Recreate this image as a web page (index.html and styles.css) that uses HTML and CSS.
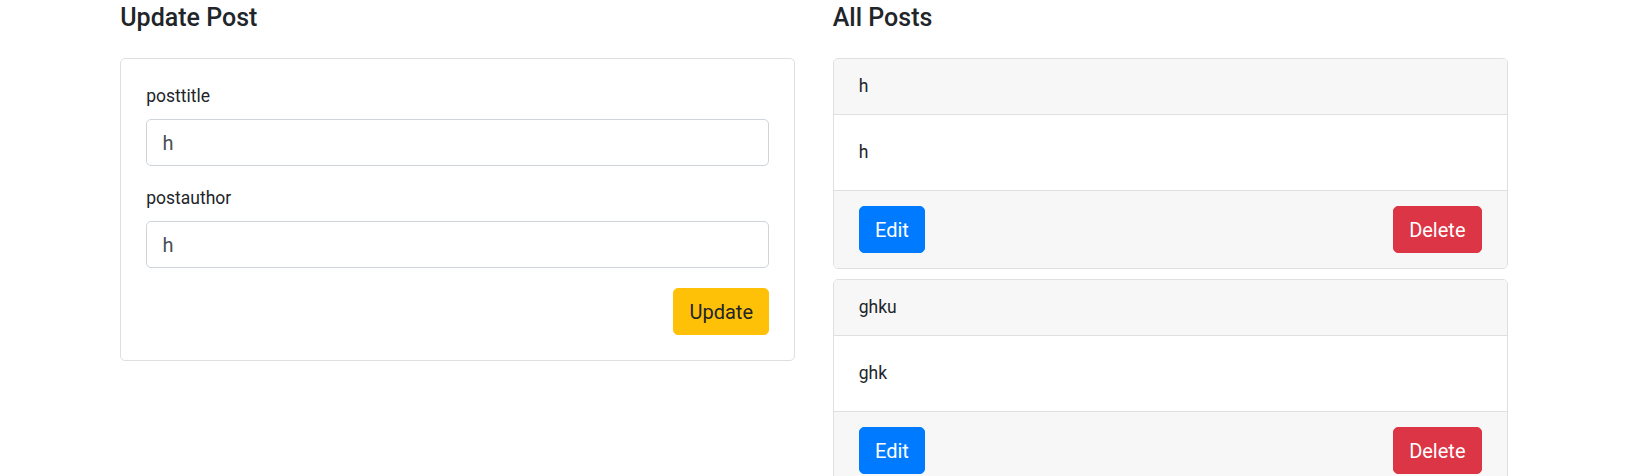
FILE: index.html
```html
<!DOCTYPE html>
<html lang="en">
<head>
<meta charset="utf-8">
<title>Posts</title>
<link rel="stylesheet" href="styles.css">
</head>
<body>
<div class="container">
  <div class="row">
    <section class="col">
      <h5 class="title">Update Post</h5>
      <form class="card">
        <div class="card-body">
          <div class="form-group">
            <label class="label" for="posttitle">posttitle</label>
            <input class="input" id="posttitle" type="text" value="h">
          </div>
          <div class="form-group">
            <label class="label" for="postauthor">postauthor</label>
            <input class="input" id="postauthor" type="text" value="h">
          </div>
          <div class="actions">
            <button type="button" class="btn btn-warning">Update</button>
          </div>
        </div>
      </form>
    </section>
    <section class="col">
      <h5 class="title">All Posts</h5>
      <div class="card post">
        <div class="card-header">h</div>
        <div class="card-body post-body">h</div>
        <div class="card-footer">
          <button type="button" class="btn btn-primary">Edit</button>
          <button type="button" class="btn btn-danger">Delete</button>
        </div>
      </div>
      <div class="card post">
        <div class="card-header">ghku</div>
        <div class="card-body post-body">ghk</div>
        <div class="card-footer">
          <button type="button" class="btn btn-primary">Edit</button>
          <button type="button" class="btn btn-danger">Delete</button>
        </div>
      </div>
    </section>
  </div>
</div>
</body>
</html>
```
FILE: styles.css
```css
* { box-sizing: border-box; }

html, body {
  margin: 0;
  padding: 0;
  background: #fff;
}

body {
  font-family: Roboto, "Liberation Sans", Arial, sans-serif;
  color: #212529;
  font-size: 17.5px;
  line-height: 25px;
}

.container {
  width: 1425px;
  margin: 0 auto;
  padding: 3px 18.75px 0;
}

.row {
  display: grid;
  grid-template-columns: 1fr 1fr;
  column-gap: 37.5px;
  align-items: start;
}

.title {
  margin: 0 0 25px;
  font-size: 25px;
  font-weight: 500;
  line-height: 30px;
  color: #212529;
}

.card {
  display: flex;
  flex-direction: column;
  background: #fff;
  border: 1px solid #dfdfdf;
  border-radius: 5px;
  margin: 0;
}

.card-body {
  padding: 25px;
}

.form-group {
  margin-bottom: 20px;
}

.label {
  display: block;
  margin-bottom: 10px;
  font-size: 17.5px;
  line-height: 25px;
  color: #212529;
}

.input {
  display: block;
  width: 100%;
  height: 47px;
  padding: 7.5px 15.25px;
  font-family: inherit;
  font-size: 20px;
  line-height: 30px;
  color: #495057;
  background: #fff;
  border: 1px solid #ced4da;
  border-radius: 5px;
  outline: none;
}

.actions {
  display: flex;
  justify-content: flex-end;
}

.btn {
  display: inline-block;
  height: 47px;
  padding: 7.5px 15.25px;
  font-family: inherit;
  font-size: 20px;
  font-weight: 400;
  line-height: 30px;
  border: 1px solid transparent;
  border-radius: 5px;
  cursor: pointer;
}

.btn-warning { background: #ffc107; border-color: #ffc107; color: #212529; }
.btn-primary { background: #007bff; border-color: #007bff; color: #fff; }
.btn-danger  { background: #dc3545; border-color: #dc3545; color: #fff; }

.post {
  margin-bottom: 10px;
}

.card-header {
  padding: 15px 25px;
  font-size: 17.5px;
  line-height: 25px;
  background: #f7f7f7;
  border-bottom: 1px solid #dfdfdf;
  border-radius: 4px 4px 0 0;
}

.post-body {
  font-size: 17.5px;
  line-height: 25px;
}

.card-footer {
  display: flex;
  justify-content: space-between;
  align-items: center;
  padding: 15px 25px;
  background: #f7f7f7;
  border-top: 1px solid #dfdfdf;
  border-radius: 0 0 4px 4px;
}
```
